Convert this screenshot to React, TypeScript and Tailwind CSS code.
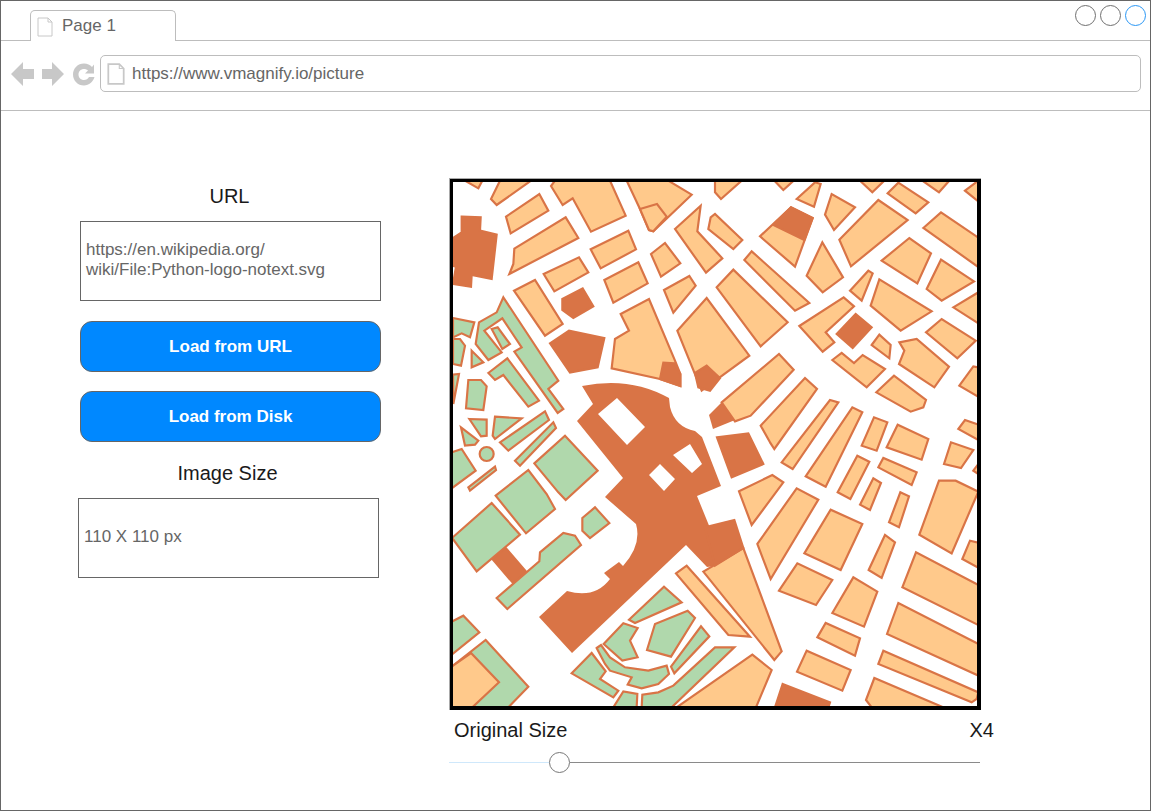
import React from "react";

const ORANGE = "#FFC98B";
const RUST = "#D97446";
const GREEN = "#B0D8AC";

type Layer = { fill: string; pts: string[] };
type Tile = { x: number; y: number; layers: Layer[] };

const tiles: Tile[] = [
  {
    x: 445,
    y: 175,
    layers: [
      {
        fill: GREEN,
        pts: [
          "24,432 88,445 75,490 50,478 24,490",
          "24,495 45,495 60,515 48,575 24,570",
          "80,530 115,565 80,580",
          "175,370 340,620 310,645 355,705 338,717 208,533 230,520 172,433 118,470 170,535 130,558 92,510 102,445 155,415",
          "140,465 158,460 195,510 172,525",
          "130,597 187,553 282,680 250,698 175,603 150,618",
          "24,602 42,600 25,690",
          "70,618 108,618 125,637 115,708 63,703",
          "73,735 125,737 125,785 108,787",
          "150,728 230,733 150,795 143,785",
          "48,760 100,800 90,812 60,815",
          "165,805 300,712 312,738 190,830",
          "210,860 325,745 333,762 225,875",
        ],
      },
      {
        fill: ORANGE,
        pts: [
          "60,20 100,43 112,20",
          "165,20 138,75 155,93 258,20",
          "183,128 283,60 310,110 197,178",
          "208,224 362,130 400,192 193,300 205,270",
          "318,36 353,93 383,73 438,173 542,125 495,20 330,20",
          "545,20 585,105 612,168 625,172 740,62 670,20",
          "585,105 636,90 665,128 625,172 612,168",
          "437,226 550,170 573,226 467,283",
          "296,300 402,250 430,295 328,352",
          "478,318 580,265 608,328 505,386",
          "618,240 660,207 706,268 648,308",
          "657,348 733,306 752,335 685,416",
          "207,350 270,318 353,450 300,485",
          "527,420 612,375 690,560 706,600 706,636 645,615 500,583 510,495 552,470",
          "690,165 767,95 757,172 832,253 783,296",
          "790,165 797,130 810,120 892,198 865,225",
          "697,470 785,372 913,545 770,650",
        ],
      },
      {
        fill: RUST,
        pts: [
          "50,128 107,130 105,170 155,182 140,315 80,303 78,338 24,330 33,278 20,275 20,195 50,175",
          "352,375 413,343 445,397 385,432 352,408",
          "315,508 372,470 478,492 458,580 375,596",
          "645,615 655,566 688,568 706,600 706,636",
          "750,597 785,575 825,612 795,650 760,640",
        ],
      },
    ],
  },
  {
    x: 715,
    y: 175,
    layers: [
      {
        fill: ORANGE,
        pts: [
          "0,55 18,75 80,20 0,20",
          "178,20 205,48 236,20",
          "245,75 300,25 317,30 297,98",
          "330,122 350,60 420,100 357,168",
          "135,187 228,100 293,132 240,278",
          "275,305 322,205 384,310 323,355",
          "373,197 490,78 578,138 408,277",
          "435,20 472,55 508,20",
          "518,58 550,26 640,85 602,118",
          "622,20 672,55 703,20",
          "750,50 790,20 790,82",
          "625,162 678,115 790,191 790,279",
          "500,260 583,192 648,238 607,328",
          "635,345 678,257 777,322 680,380",
          "88,258 110,232 283,387 240,410",
          "5,340 55,287 218,445 137,517",
          "405,350 460,290 473,298 440,380",
          "467,395 493,316 650,412 557,470",
          "715,400 790,355 790,448",
          "633,475 680,435 782,500 727,553",
          "253,456 386,370 417,397 332,475 358,505 323,533",
          "470,513 493,482 527,513 523,553",
          "352,558 380,537 417,567 443,543 510,585 455,640",
          "553,505 605,495 702,578 658,640 552,570 568,530",
          "484,655 537,605 633,678 625,700 587,713",
          "733,635 775,577 790,580 790,668",
          "20,685 192,540 236,587 107,725 60,742",
        ],
      },
      {
        fill: RUST,
        pts: [
          "175,153 228,100 293,132 268,198",
          "365,480 422,420 470,460 413,522",
        ],
      },
    ],
  },
  {
    x: 445,
    y: 445,
    layers: [
      {
        fill: RUST,
        pts: ["142,345 182,312 245,385 205,418"],
      },
      {
        fill: GREEN,
        pts: [
          "20,25 50,15 92,80 20,133",
          "70,130 150,68 153,78 75,140",
          "268,58 360,-25 458,80 362,168 340,145",
          "152,155 250,78 305,150 330,195 243,268",
          "20,283 140,177 225,272 95,382 20,280",
          "412,222 450,190 493,237 435,282 412,260",
          "155,462 283,352 285,325 355,267 390,275 408,303 187,495",
          "20,533 55,515 103,565 20,632",
          "20,668 122,588 250,728 190,790 20,790",
          "380,688 440,627 482,682 465,705 520,740 505,760",
          "552,527 657,428 710,475 570,537",
          "535,538 578,552 555,590 578,640 532,650 476,600",
          "606,618 630,540 728,500 750,522 678,638",
          "678,668 768,547 793,577 688,688",
          "455,612 468,603 495,640 540,670 610,680 665,665 672,690 640,720 590,733 548,722 560,700 495,680 480,660",
          "505,790 535,742 577,750 575,790",
          "590,790 592,752 640,745 685,725 810,610 868,610 680,790",
        ],
      },
      {
        fill: ORANGE,
        pts: ["20,668 78,627 162,715 82,790 20,790"],
      },
    ],
  },
  {
    x: 715,
    y: 445,
    layers: [
      {
        fill: ORANGE,
        pts: [
          "-117,388 -85,365 105,578 40,573",
          "-35,383 85,312 200,622 178,648",
          "-115,790 112,632 170,678 123,790",
          "72,142 172,93 205,115 110,243",
          "127,300 245,133 310,167 167,405",
          "192,440 247,358 352,408 303,483",
          "268,328 347,197 442,240 377,378",
          "352,507 415,400 487,443 447,548",
          "307,580 332,537 435,583 420,635",
          "246,683 275,620 407,678 382,740",
          "461,378 510,273 540,295 500,402",
          "562,430 603,325 790,423 790,543",
          "516,570 550,477 790,600 790,695",
          "490,660 505,620 790,745 785,765 770,775",
          "453,768 478,702 685,790 470,790",
          "613,272 672,110 722,110 790,143 710,328",
          "742,345 765,290 790,296 790,371",
          "522,235 556,145 582,157 552,250",
          "435,182 475,103 498,117 465,198",
          "368,145 427,35 463,53 406,165",
          "165,-5 137,-55 270,-198 306,-165 178,15",
          "200,55 345,-132 370,-125 233,75",
          "272,97 412,-110 442,-95 332,128",
          "440,5 477,-80 517,-65 485,20",
          "515,10 548,-58 640,-15 620,47",
          "490,70 505,42 605,85 590,123",
          "687,60 708,-5 775,18 738,72",
          "730,-45 750,-72 790,-58 790,-12",
          "775,80 790,60 790,90",
        ],
      },
      {
        fill: RUST,
        pts: [
          "203,720 345,775 340,790 180,790",
          "0,365 85,312 58,228 -30,250",
          "6,-20 100,-32 145,60 50,100",
        ],
      },
    ],
  },
];

const bigBuilding =
  "M582 387 Q630 377 669 399 L670 408 Q675 428 695 432 L702 438 L721 487 L697 497 L710 529 L734 521 L743 549 L715 567 L707 568 L686 546 L572 654 L539 618 L567 592 Q595 600 610 580 L604 574 L619 563 L623 567 Q642 546 636 525 L605 498 L623 479 L577 422 L593 405 Z " +
  "M598 415 L617 399 L645 428 L627 446 Z M649 476 L660 465 L675 480 L664 492 Z M673 456 L690 445 L702 465 L692 474 Z";

function CityMap() {
  return (
    <svg viewBox="453 183 524 524" className="block w-[524px] h-[524px]">
      <path d={bigBuilding} fill={RUST} fillRule="evenodd" />
      <path d="M709 416 L722 403 L735 421 L713 430 Z" fill={RUST} />
      {tiles.map((t, i) => (
        <g key={i} transform={`translate(${t.x} ${t.y}) scale(0.33333)`}>
          {t.layers.map((l, j) => (
            <g key={j} fill={l.fill} stroke={RUST} strokeWidth={6.5} strokeLinejoin="miter">
              {l.pts.map((p, k) => (
                <polygon key={k} points={p} />
              ))}
            </g>
          ))}
          {i === 2 && <circle cx={125} cy={30} r={21} fill={GREEN} stroke={RUST} strokeWidth={6.5} />}
        </g>
      ))}
    </svg>
  );
}

function DocIcon({ className, stroke }: { className: string; stroke: number }) {
  return (
    <svg viewBox="0 0 16 20" className={className} fill="#fff" stroke="#c8c8c8" strokeWidth={stroke}>
      <path d="M1 1 H11 L15 5 V19 H1 Z" />
      <path d="M11 1 V5 H15" fill="none" strokeWidth={1} />
    </svg>
  );
}

function Circle({ blue }: { blue?: boolean }) {
  return (
    <div
      className={
        blue
          ? "w-[21px] h-[21px] rounded-full border-[1.5px] border-[#2a97f5]"
          : "w-[21px] h-[21px] rounded-full border-[1.5px] border-[#6f6f6f]"
      }
    />
  );
}

export default function App() {
  return (
    <div className="relative w-[1151px] h-[811px] box-border border border-[#666] bg-white overflow-hidden font-['Liberation_Sans',sans-serif]">
      {/* tab strip */}
      <div className="h-[40px] box-border border-b border-[#bdbdbd] pl-[29px] pt-[9px]">
        <div className="w-[146px] h-[31px] box-border border border-b-0 border-[#bdbdbd] rounded-t-[5px] bg-white flex items-center pl-[6px] gap-[9px]">
          <DocIcon className="w-[16px] h-[20px] mt-[1px]" stroke={1} />
          <span className="text-[17px] leading-[20px] text-[#666]">Page 1</span>
        </div>
      </div>
      <div className="absolute top-[4px] right-[4px] flex gap-[4px]">
        <Circle />
        <Circle />
        <Circle blue />
      </div>

      {/* address row */}
      <div className="h-[70px] box-border border-b border-[#bdbdbd] flex items-start pl-[10px] pr-[9px] pt-[14px]">
        <svg viewBox="0 0 84 26" className="w-[84px] h-[26px] mt-[6px] shrink-0" fill="#c8c8c8">
          <path d="M0 13 L12 1 V8 H23 V18 H12 V25 Z" />
          <path d="M53 13 L41 1 V8 H31 V18 H41 V25 Z" />
          <path d="M73 2.5 C76.5 2.5 79 3.8 81 6 L83 3.5 V12.5 H74 L77 9.5 C75.8 8.5 74.5 8 73 8 C70 8 67.5 10.2 67.5 13.5 C67.5 16.8 70 19 73 19 C75.2 19 77 17.8 78 16 H83.5 C82.2 20.8 78 24.5 73 24.5 C66.8 24.5 62 19.7 62 13.5 C62 7.3 66.8 2.5 73 2.5 Z" />
        </svg>
        <div className="ml-[5px] flex-1 h-[37px] box-border border border-[#bdbdbd] rounded-[5px] flex items-center pl-[6px] gap-[7px]">
          <DocIcon className="w-[18px] h-[22px]" stroke={1.6} />
          <span className="text-[17px] leading-[20px] text-[#666]">https://www.vmagnify.io/picture</span>
        </div>
      </div>

      {/* page body */}
      <div className="flex pl-[79px] pt-[67px]">
        <div className="w-[301px] pt-[6px] flex flex-col">
          <div className="-ml-[2px] text-center text-[20px] leading-[24px] text-[#1a1a1a]">URL</div>
          <div className="mt-[13px] h-[80px] box-border border border-[#666] flex items-center px-[5px] text-[17px] leading-[20px] text-[#666]">
            <div className="-mt-[2px]">
              https://en.wikipedia.org/
              <br />
              wiki/File:Python-logo-notext.svg
            </div>
          </div>
          <button className="mt-[20px] h-[51px] box-border border border-[#666] rounded-[12px] bg-[#0088ff] text-white font-bold text-[17px]">
            Load from URL
          </button>
          <button className="mt-[19px] h-[51px] box-border border border-[#666] rounded-[12px] bg-[#0088ff] text-white font-bold text-[17px]">
            Load from Disk
          </button>
          <div className="mt-[19px] -ml-[6px] text-center text-[20px] leading-[24px] text-[#1a1a1a]">Image Size</div>
          <div className="mt-[13px] -ml-[2px] w-[301px] h-[80px] box-border border border-[#666] flex items-center px-[5px] text-[17px] leading-[20px] text-[#666]">
            <span className="-mt-[2px]">110 X 110 px</span>
          </div>
        </div>

        <div className="ml-[68px] w-[545px]">
          <div className="w-[532px] h-[532px] box-border border-l border-t border-[#aaa]">
            <div className="w-[531px] h-[531px] box-border border-l-[3px] border-t-[3px] border-r-[4px] border-b-[4px] border-black overflow-hidden">
              <CityMap />
            </div>
          </div>
          <div className="mt-[8px] pl-[5px] flex justify-between text-[20px] leading-[24px] text-[#1a1a1a]">
            <span>Original Size</span>
            <span>X4</span>
          </div>
          <div className="mt-[10px] flex items-center h-[21px]">
            <div className="w-[100px] h-px bg-[#cfe8fb]" />
            <div className="w-[21px] h-[21px] box-border rounded-full border border-[#777] bg-white" />
            <div className="w-[410px] h-px bg-[#8a8a8a]" />
          </div>
        </div>
      </div>
    </div>
  );
}
